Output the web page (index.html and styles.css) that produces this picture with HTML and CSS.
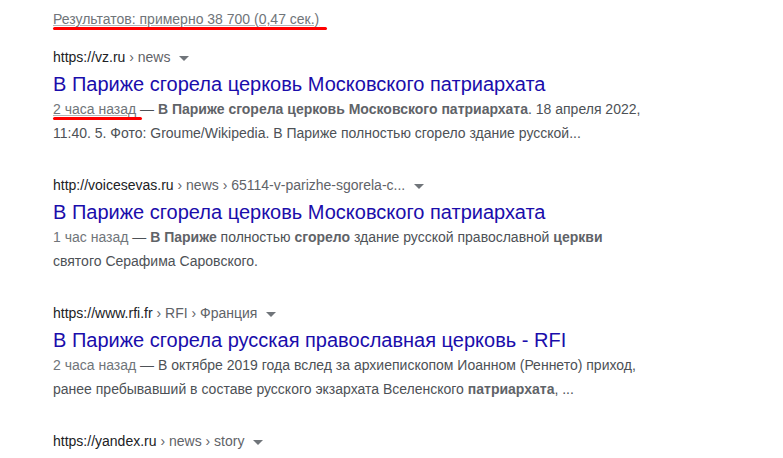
FILE: index.html
```html
<!DOCTYPE html>
<html>
<head>
    <title>Результаты поиска</title>
    <link rel="stylesheet" href="styles.css">
</head>
<body>
    <div class="results">
        <div class="stats"><span class="marked">Результатов: примерно 38 700 (0,47 сек.)</span></div>

        <div class="result">
            <div class="cite">https://vz.ru<span class="path"> › news</span><span class="arrow"></span></div>
            <a class="title" href="#">В Париже сгорела церковь Московского патриархата</a>
            <div class="snippet"><span class="date marked">2 часа назад</span> — <b>В Париже сгорела церковь Московского патриархата</b>. 18 апреля 2022, 11:40. 5. Фото: Groume/Wikipedia. В Париже полностью сгорело здание русской...</div>
        </div>

        <div class="result">
            <div class="cite">http://voicesevas.ru<span class="path"> › news › 65114-v-parizhe-sgorela-c...</span><span class="arrow"></span></div>
            <a class="title" href="#">В Париже сгорела церковь Московского патриархата</a>
            <div class="snippet"><span class="date">1 час назад</span> — <b>В Париже</b> полностью <b>сгорело</b> здание русской православной <b>церкви</b> святого Серафима Саровского.</div>
        </div>

        <div class="result">
            <div class="cite">https://www.rfi.fr<span class="path"> › RFI › Франция</span><span class="arrow"></span></div>
            <a class="title" href="#">В Париже сгорела русская православная церковь - RFI</a>
            <div class="snippet"><span class="date">2 часа назад</span> — В октябре 2019 года вслед за архиепископом Иоанном (Реннето) приход, ранее пребывавший в составе русского экзархата Вселенского <b>патриархата</b>, ...</div>
        </div>

        <div class="result">
            <div class="cite">https://yandex.ru<span class="path"> › news › story</span><span class="arrow"></span></div>
        </div>
    </div>
</body>
</html>
```

FILE: styles.css
```css
body { margin: 0; background: #fff; font-family: Arial, "Liberation Sans", sans-serif; }
.results { padding: 8px 0 0 53px; width: 600px; }
.stats { font-size: 14px; line-height: 22px; color: #70757a; margin-bottom: 17px; }
.marked { position: relative; text-decoration: underline; text-decoration-color: #b0b3b8; }
.marked::after { content: ""; position: absolute; left: 0; right: -8px; bottom: -3px; height: 3px; border-radius: 2px; background: #ff0000; }
.date.marked::after { right: -6px; bottom: -3px; }
.result { margin-bottom: 30px; }
.cite { font-size: 14px; line-height: 20px; color: #202124; }
.path { color: #5f6368; }
.arrow { display: inline-block; margin-left: 9px; vertical-align: middle; border-left: 5px solid transparent; border-right: 5px solid transparent; border-top: 5px solid #70757a; }
.title { display: block; margin-top: 4px; font-size: 20px; line-height: 26px; color: #1a0dab; text-decoration: none; }
.snippet { font-size: 14px; line-height: 24px; color: #4d5156; }
.snippet b { color: #5f6368; }
.date { color: #70757a; }
```
